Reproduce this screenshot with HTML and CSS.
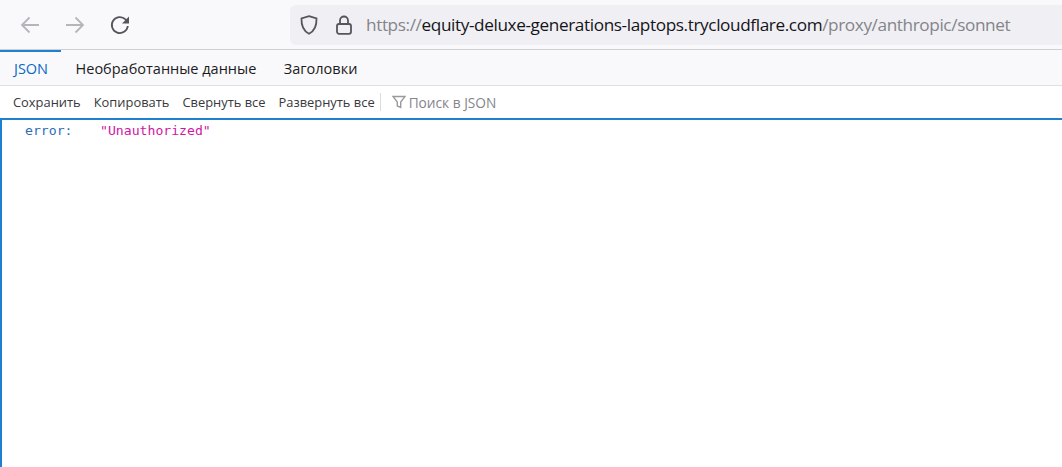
FILE: index.html
```html
<!DOCTYPE html>
<html lang="ru">
<head>
<meta charset="utf-8">
<title>JSON</title>
<link rel="stylesheet" href="styles.css">
</head>
<body>
<header class="nav">
  <div class="nav-buttons">
    <svg class="icon" viewBox="0 0 20 20"><path d="M19 10H2M9.5 2.500 2 10l7.500 7.500" class="dim"/></svg>
    <svg class="icon" viewBox="0 0 20 20"><path d="M1 10h17M10.500 2.500 18 10l-7.500 7.500" class="dim"/></svg>
    <svg class="icon" viewBox="0 0 20 20"><path d="M17.800 11a8 8 0 1 1-2.300-6.600L18 7" class="dark"/><path d="M19 1.500v7h-7z" class="solid"/></svg>
  </div>
  <div class="urlbar">
    <svg class="shield" viewBox="0 0 18 20"><path d="M9 1.200 16.500 3.500c.3 7.500-2 12.500-7.500 15.300C3.500 16 1.200 11 1.500 3.500z" class="dark"/></svg>
    <svg class="lock" viewBox="0 0 16 20"><path d="M4 9V5.500a4 4 0 0 1 8 0V9" class="dark"/><rect x="1" y="9" width="14" height="9.800" rx="2" class="dark"/></svg>
    <div class="url"><span class="muted">https://</span>equity-deluxe-generations-laptops.trycloudflare.com<span class="muted">/proxy/anthropic/sonnet</span></div>
  </div>
</header>
<nav class="tabs">
  <div class="tab active">JSON</div>
  <div class="tab">Необработанные данные</div>
  <div class="tab">Заголовки</div>
</nav>
<div class="toolbar">
  <span class="btn">Сохранить</span>
  <span class="btn">Копировать</span>
  <span class="btn">Свернуть все</span>
  <span class="btn">Развернуть все</span>
  <span class="sep"></span>
  <svg class="filter" viewBox="0 0 14 14"><path d="M1 1.500h12L8.700 7v5.500l-3.400-1.500V7z"/></svg>
  <span class="search">Поиск в JSON</span>
</div>
<main class="panel">
  <div class="row"><span class="key">error:</span><span class="value">"Unauthorized"</span></div>
</main>
</body>
</html>
```
FILE: styles.css
```css
* { box-sizing: border-box; }
html, body { height: 100%; }
body {
  margin: 0;
  display: flex;
  flex-direction: column;
  overflow: hidden;
  background: #fff;
  color: #1c1b22;
  font-family: "Open Sans", "Noto Sans", sans-serif;
}
path, rect { fill: none; stroke-width: 1.800; }
.dim { stroke: #b5b5ba; }
.dark { stroke: #55555a; }
.solid { fill: #55555a; stroke: none; }
.nav {
  height: 50px;
  flex: none;
  display: flex;
  align-items: center;
  padding-top: 1px;
  background: #f9f9fb;
  border-bottom: 1px solid #cfcfd3;
}
.nav-buttons {
  width: 290px;
  display: flex;
  gap: 25px;
  padding-left: 20px;
}
.icon { width: 20px; height: 20px; }
.urlbar {
  flex: 1;
  height: 40px;
  margin-top: -1px;
  display: flex;
  align-items: center;
  background: #f0f0f4;
  border-radius: 6px 0 0 6px;
  padding-left: 10px;
}
.shield { width: 18px; height: 20px; }
.lock { width: 16px; height: 20px; margin-left: 18px; }
.url {
  margin-left: 14px;
  font-size: 17.200px;
  letter-spacing: -0.390px;
  white-space: nowrap;
  color: #15141a;
}
.muted { color: #84848a; }
.tabs {
  height: 36px;
  flex: none;
  display: flex;
  gap: 27.500px;
  padding-left: 14px;
  background: #f9f9fb;
  border-bottom: 1px solid #e0e0e2;
  font-size: 14.500px;
}
.tab {
  position: relative;
  display: flex;
  align-items: center;
  padding-top: 2px;
}
.tab.active {
  color: #0a68c4;
}
.tab.active::before {
  content: "";
  position: absolute;
  top: 0;
  left: -14px;
  right: -13px;
  height: 2px;
  background: #1f7fd0;
}
.toolbar {
  height: 32px;
  flex: none;
  display: flex;
  align-items: center;
  padding-left: 13px;
  gap: 13px;
  font-size: 12.900px;
  color: #38383d;
}
.btn { white-space: nowrap; }
.sep { width: 1px; height: 18px; margin-left: -8px; background: #dcdcdf; }
.filter { width: 14px; height: 14px; margin-left: -2px; }
.filter path { stroke: #9a9a9f; stroke-width: 1.400; }
.search { margin-left: -10px; font-size: 13.700px; color: #85858a; }
.panel {
  flex: 1;
  border-top: 2px solid #1f7fd0;
  border-left: 2px solid #1f7fd0;
  padding-left: 23px;
  font-family: "DejaVu Sans Mono", monospace;
  font-size: 13.150px;
}
.row { display: flex; height: 20px; align-items: center; }
.key { width: 75px; color: #2d6db5; }
.value { color: #d017a3; }
```
